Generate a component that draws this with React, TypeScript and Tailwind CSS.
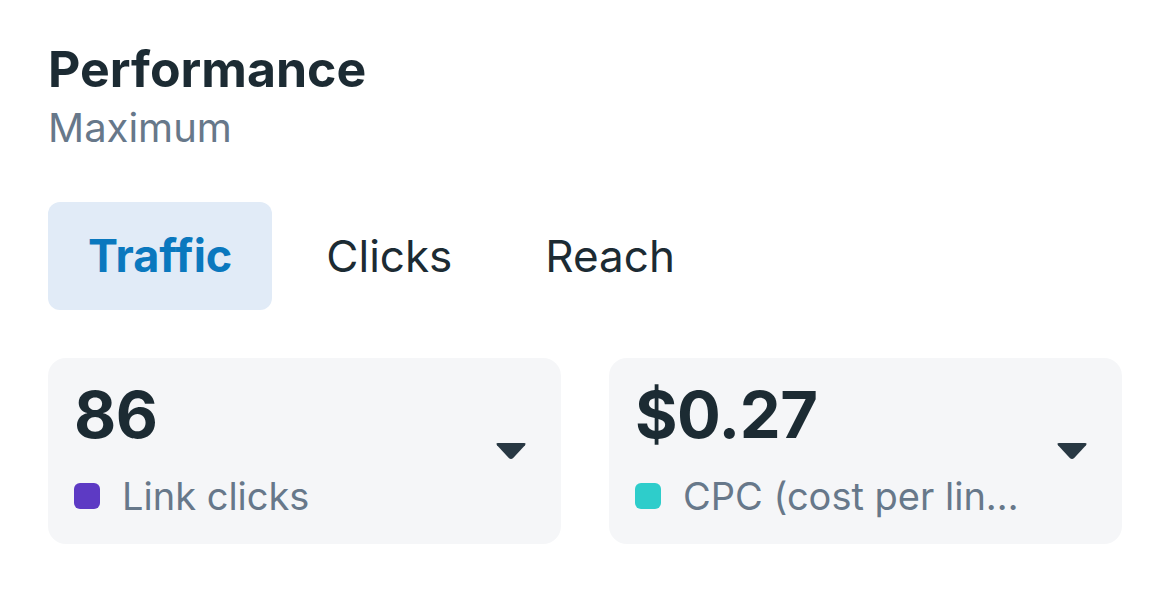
import React from "react";

function Caret() {
  return (
    <svg width="32" height="20" viewBox="0 0 32 20" className="shrink-0">
      <path d="M3 2 H29 Q31.5 2 30 4.2 L18.2 17 Q16 19.2 13.8 17 L2 4.2 Q0.5 2 3 2 Z" fill="#283843" />
    </svg>
  );
}

function Card({ value, label, color }: { value: string; label: string; color: string }) {
  return (
    <div className="flex-1 min-w-0 h-[186px] rounded-[18px] bg-[#f5f6f8] pl-[26px] pr-[34px] flex items-center">
      <div className="flex-1 min-w-0 flex flex-col">
        <div className="text-[65px] leading-[62px] font-bold text-[#1c2b33] tracking-[-0.5px]">{value}</div>
        <div className="flex items-center gap-[22px] mt-[28px]">
          <div className="w-[26px] h-[26px] rounded-[6px] shrink-0" style={{ backgroundColor: color }} />
          <div className="text-[38px] leading-[44px] text-[#67788a] whitespace-nowrap">{label}</div>
        </div>
      </div>
      <Caret />
    </div>
  );
}

export default function App() {
  return (
    <div className="w-[1170px] h-[597px] bg-white overflow-hidden pl-[48px] pr-[48px] pt-[38px]" style={{ fontFamily: "Inter, 'Noto Sans', sans-serif" }}>
      <div className="text-[50px] leading-[62px] font-bold text-[#1c2b33]">Performance</div>
      <div className="text-[40px] leading-[52px] text-[#67788a] mt-[2px]">Maximum</div>
      <div className="flex items-center mt-[48px]">
        <div className="h-[108px] px-[40px] rounded-[12px] bg-[#e1ebf7] flex items-center text-[45px] font-bold text-[#0a78be]">Traffic</div>
        <div className="h-[108px] pl-[54px] pr-[47px] flex items-center text-[44px] text-[#1c2b33]">Clicks</div>
        <div className="h-[108px] pl-[46px] pr-[46px] flex items-center text-[44px] text-[#1c2b33]">Reach</div>
      </div>
      <div className="flex gap-[48px] mt-[48px]">
        <Card value="86" label="Link clicks" color="#5d3ac4" />
        <Card value="$0.27" label="CPC (cost per lin…" color="#2ecdcb" />
      </div>
    </div>
  );
}
